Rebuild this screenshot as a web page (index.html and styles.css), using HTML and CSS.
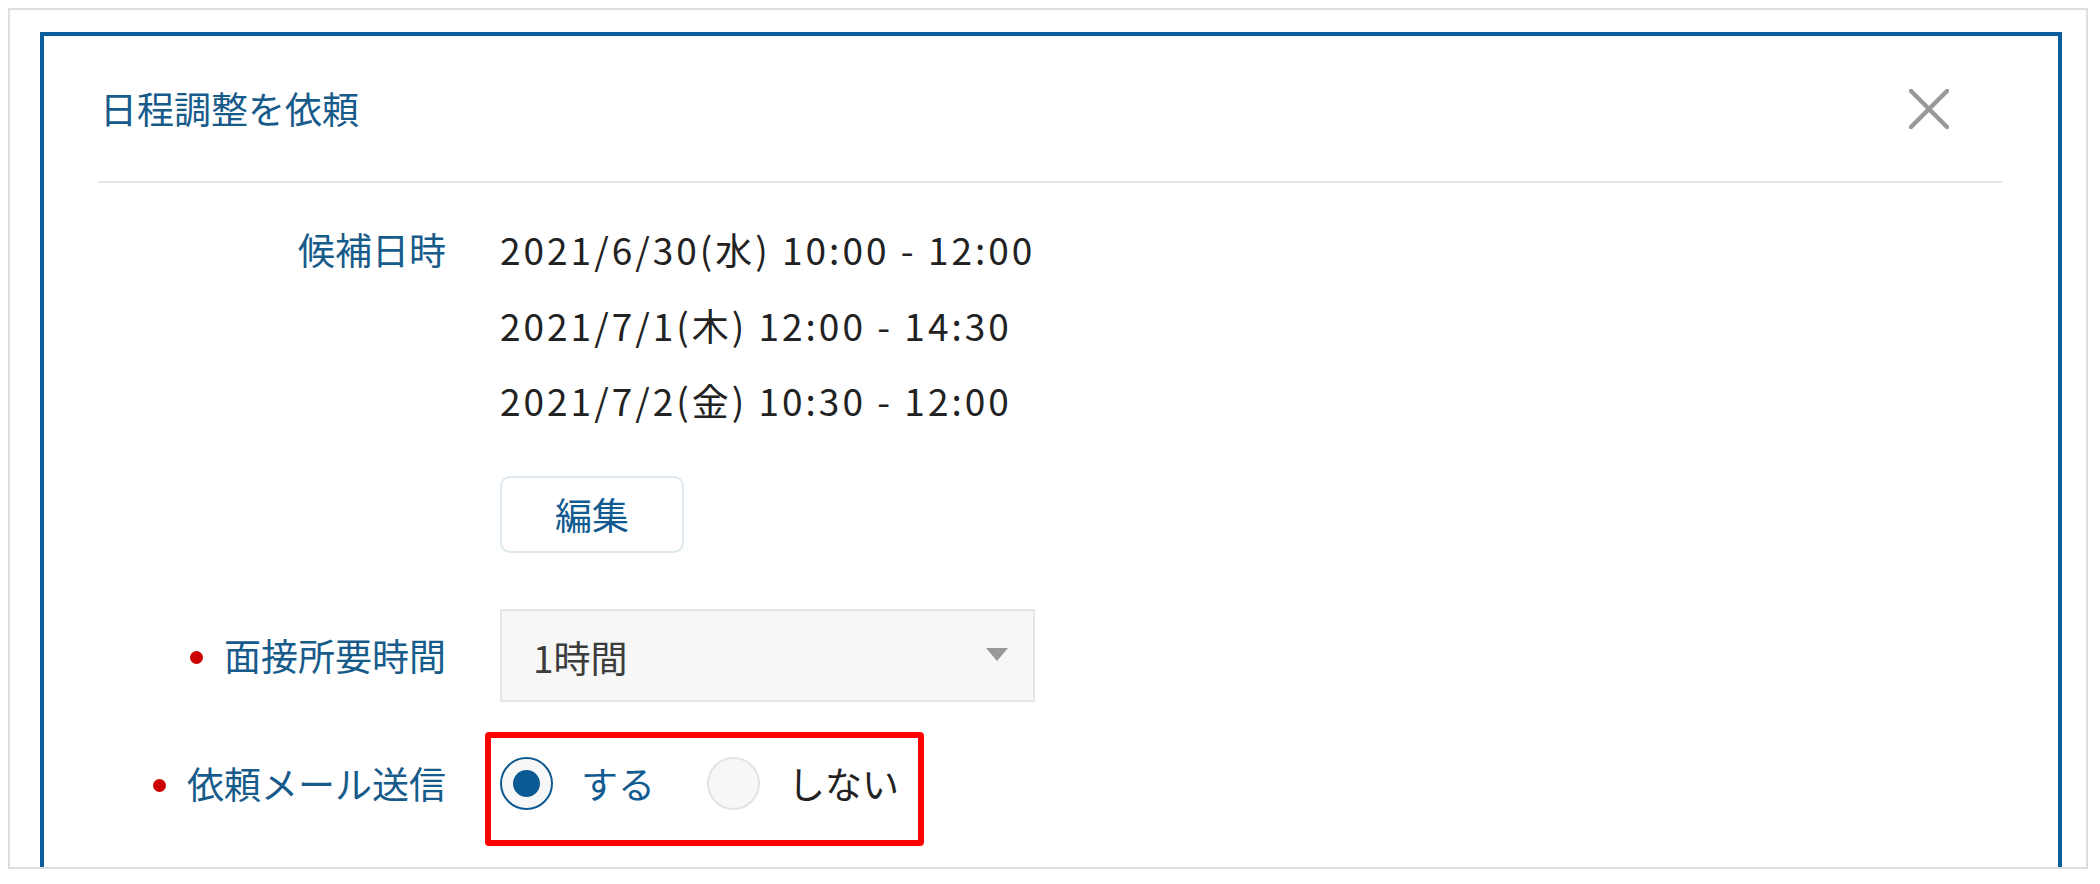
FILE: index.html
```html
<!DOCTYPE html>
<html lang="ja">
<head>
    <meta charset="UTF-8">
    <meta name="viewport" content="width=device-width, initial-scale=1.0">
    <title>日程調整を依頼</title>
    <link rel="stylesheet" href="styles.css">
</head>
<body>
    <div class="frame">
        <div class="modal">
            <div class="modal-header">
                <h1 class="modal-title">日程調整を依頼</h1>
                <button class="close-btn" aria-label="閉じる">
                    <svg width="40" height="40" viewBox="0 0 40 40">
                        <path d="M2 2 L38 38 M38 2 L2 38" stroke="#999" stroke-width="4.5" stroke-linecap="round" fill="none"/>
                    </svg>
                </button>
            </div>

            <div class="modal-body">
                <div class="form-row row-dates">
                    <div class="form-label">候補日時</div>
                    <div class="form-value">
                        <ul class="date-list">
                            <li>2021/6/30(水) 10:00 - 12:00</li>
                            <li>2021/7/1(木) 12:00 - 14:30</li>
                            <li>2021/7/2(金) 10:30 - 12:00</li>
                        </ul>
                        <button class="edit-btn">編集</button>
                    </div>
                </div>

                <div class="form-row row-select">
                    <div class="form-label required">面接所要時間</div>
                    <div class="form-value">
                        <div class="select">
                            <span>1時間</span>
                            <span class="select-arrow"></span>
                        </div>
                    </div>
                </div>

                <div class="form-row row-radio">
                    <div class="form-label required">依頼メール送信</div>
                    <div class="form-value">
                        <div class="radio-group highlight">
                            <label class="radio checked"><span class="radio-mark"></span>する</label>
                            <label class="radio"><span class="radio-mark"></span>しない</label>
                        </div>
                    </div>
                </div>
            </div>
        </div>
    </div>
</body>
</html>
```

FILE: styles.css
```css
body {
    margin: 8px;
    background-color: #ffffff;
    font-family: "Noto Sans CJK JP", "Noto Sans", sans-serif;
    color: #262626;
}
.frame {
    width: 2080px;
    height: 861px;
    box-sizing: border-box;
    border: 2px solid #dedede;
    overflow: hidden;
}
.modal {
    margin: 22px 24px 0 30px;
    border: 4px solid #0b5e9c;
    padding: 0 56px 0 54px;
    height: 1000px;
}
.modal-header {
    display: flex;
    align-items: center;
    justify-content: space-between;
    height: 145px;
    border-bottom: 2px solid #e6e6e6;
}
.modal-title {
    margin: 0 0 0 2px;
    font-size: 37px;
    font-weight: normal;
    color: #175b8a;
    line-height: 1;
}
.close-btn {
    background: none;
    border: none;
    padding: 0;
    margin-right: 53px;
    width: 40px;
    height: 40px;
    cursor: pointer;
}
.close-btn svg {
    display: block;
}
.modal-body {
    padding-top: 29px;
}
.form-row {
    display: flex;
    gap: 54px;
}
.row-dates {
    align-items: flex-start;
    margin-bottom: 56px;
}
.row-select {
    align-items: center;
    margin-bottom: 44px;
}
.row-radio {
    align-items: center;
}
.form-label {
    width: 348px;
    flex-shrink: 0;
    text-align: right;
    font-size: 37px;
    line-height: 75px;
    color: #175b8a;
}
.form-label.required::before {
    content: "";
    display: inline-block;
    width: 13px;
    height: 13px;
    border-radius: 50%;
    background-color: #cc0000;
    margin-right: 21px;
    vertical-align: middle;
    position: relative;
    top: -3px;
}
.date-list {
    list-style: none;
    margin: 0;
    padding: 0;
}
.date-list li {
    font-size: 37px;
    line-height: 75.5px;
    letter-spacing: 3px;
    color: #222222;
}
.edit-btn {
    margin-top: 37px;
    width: 184px;
    height: 77px;
    background: #ffffff;
    border: 2px solid #dde7ee;
    border-radius: 10px;
    font-family: inherit;
    font-size: 37px;
    color: #115b91;
    cursor: pointer;
}
.select {
    width: 535px;
    height: 93px;
    box-sizing: border-box;
    display: flex;
    align-items: center;
    justify-content: space-between;
    padding: 4px 25px 0 31px;
    background-color: #f7f7f7;
    border: 2px solid #e6e6e6;
    font-size: 37px;
    color: #3c3c3c;
}
.select-arrow {
    width: 0;
    height: 0;
    border-left: 11.5px solid transparent;
    border-right: 11.5px solid transparent;
    border-top: 13px solid #999999;
    margin-top: -6px;
}
.radio-group {
    display: inline-flex;
    align-items: center;
    gap: 52px;
    position: relative;
}
/* 注釈の赤枠 */
.radio-group.highlight::after {
    content: "";
    position: absolute;
    top: -25px;
    left: -15px;
    right: -25px;
    bottom: -36px;
    border: 6px solid #ff0000;
    border-radius: 4px;
}
.radio {
    display: flex;
    align-items: center;
    gap: 28px;
    font-size: 37px;
    line-height: 53px;
    color: #222222;
}
.radio.checked {
    color: #115b91;
}
.radio-mark {
    width: 53px;
    height: 53px;
    box-sizing: border-box;
    border-radius: 50%;
    border: 2px solid #e3e3e3;
    background-color: #f7f7f7;
    display: flex;
    align-items: center;
    justify-content: center;
}
.radio.checked .radio-mark {
    border-color: #0e5a90;
}
.radio.checked .radio-mark::after {
    content: "";
    width: 27px;
    height: 27px;
    border-radius: 50%;
    background-color: #0b5a93;
}
```
